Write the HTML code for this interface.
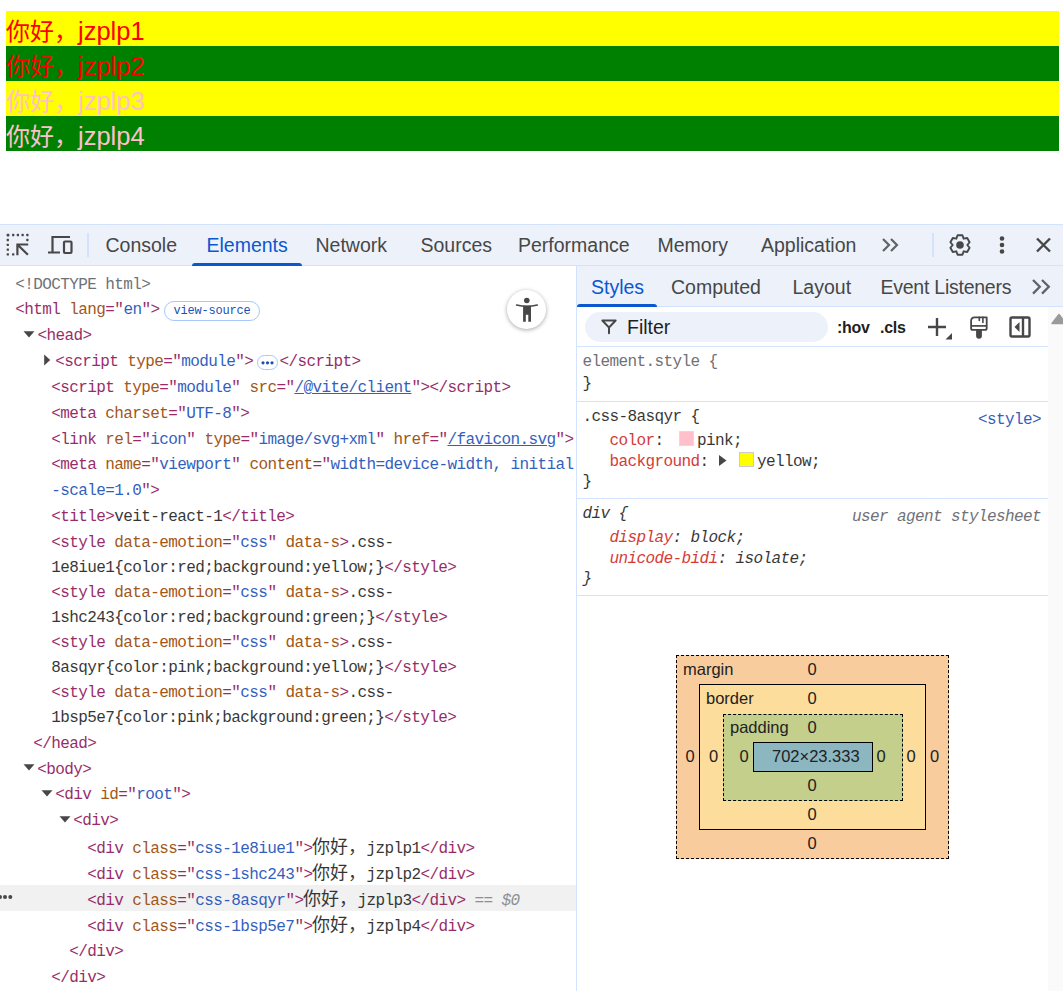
<!DOCTYPE html><html lang="zh-CN"><head><meta charset="utf-8"><style>
*{box-sizing:border-box}
html,body{margin:0;padding:0;width:1063px;height:991px;overflow:hidden;background:#fff}
body{position:relative;font-family:"Liberation Sans",sans-serif}
.a{position:absolute}
.bar{position:absolute;left:6px;width:1053px;height:35px}
.bt{position:absolute;left:6px;font:25.5px/35px "Liberation Sans",sans-serif;white-space:pre}
.cj{font-size:24px}
.tb{position:absolute;left:0;width:1063px;background:#edf2fa}
.tab{position:absolute;font:19.5px/24px "Liberation Sans",sans-serif;color:#474747;white-space:pre}
.m{position:absolute;font:16px/24px "Liberation Mono",monospace;letter-spacing:-0.6px;white-space:pre;color:#1f1f1f;opacity:.9}
.cz{font-family:"Liberation Serif",serif;font-size:18px;letter-spacing:0}
.line{position:absolute;background:#d3e3fd}
</style></head><body>
<div class="bar" style="top:11px;background:#ffff00"></div>
<div class="bt" style="top:13.5px;color:red"><span class="cj">你好，</span>jzplp1</div>
<div class="bar" style="top:46px;background:#008000"></div>
<div class="bt" style="top:48.5px;color:red"><span class="cj">你好，</span>jzplp2</div>
<div class="bar" style="top:81px;background:#ffff00"></div>
<div class="bt" style="top:83.5px;color:pink"><span class="cj">你好，</span>jzplp3</div>
<div class="bar" style="top:116px;background:#008000"></div>
<div class="bt" style="top:118.5px;color:pink"><span class="cj">你好，</span>jzplp4</div>
<div class="tb" style="top:224px;height:42px;border-top:1px solid #d3e3fd;border-bottom:1px solid #d3e3fd"></div>
<div class="tab" style="left:105.5px;top:233px;color:#474747">Console</div>
<div class="tab" style="left:206.5px;top:233px;color:#0b57d0">Elements</div>
<div class="tab" style="left:315.5px;top:233px;color:#474747">Network</div>
<div class="tab" style="left:420.5px;top:233px;color:#474747">Sources</div>
<div class="tab" style="left:518.0px;top:233px;color:#474747">Performance</div>
<div class="tab" style="left:657.5px;top:233px;color:#474747">Memory</div>
<div class="tab" style="left:761.0px;top:233px;color:#474747">Application</div>
<div class="a" style="left:192px;top:263px;width:110px;height:3px;background:#0b57d0;border-radius:3px 3px 0 0"></div>
<div class="line" style="left:87px;top:233px;width:2px;height:24px"></div>
<div class="line" style="left:932px;top:233px;width:1.6px;height:24px"></div>
<svg class="a" style="left:0;top:0" width="1063" height="991" viewBox="0 0 1063 991">
<g fill="none" stroke="#474747" stroke-width="2.2">
 <path d="M17.4 244.5 h10.8 M17.4 243.4 v11.9 M17.6 244.7 l10.3 10.1"/>
 <path d="M48 252.5 h12 M52.5 252.5 v-15.5 h17.5"/>
 <rect x="64" y="241.5" width="7.5" height="11.5" rx="1"/>
 <path d="M883 239 l6 6 l-6 6 M891 239 l6 6 l-6 6" stroke="#5f6368"/>
 <path d="M1037 238.5 l13 13 M1050 238.5 l-13 13" stroke-width="2.4"/>
</g>
<g fill="#474747"><rect x="6.65" y="233.85" width="2.7" height="2.7" rx="0.7"/><rect x="12.05" y="233.85" width="2.3" height="2.3" rx="0.6"/><rect x="16.75" y="233.85" width="2.3" height="2.3" rx="0.6"/><rect x="21.45" y="233.85" width="2.3" height="2.3" rx="0.6"/><rect x="26.25" y="233.85" width="2.3" height="2.3" rx="0.6"/><rect x="26.25" y="238.85" width="2.3" height="2.3" rx="0.6"/><rect x="6.65" y="238.85" width="2.3" height="2.3" rx="0.6"/><rect x="6.65" y="243.65" width="2.3" height="2.3" rx="0.6"/><rect x="6.65" y="248.45" width="2.3" height="2.3" rx="0.6"/><rect x="6.65" y="253.25" width="2.3" height="2.3" rx="0.6"/><rect x="12.05" y="253.25" width="2.3" height="2.3" rx="0.6"/>
 <circle cx="1002" cy="238.5" r="2.3"/><circle cx="1002" cy="245" r="2.3"/><circle cx="1002" cy="251.5" r="2.3"/>
</g>
</svg>
<svg class="a" style="left:0;top:0" width="1063" height="991"><polygon points="957.58,235.30 962.42,235.30 963.65,238.68 967.19,238.05 969.61,242.24 967.30,245.00 969.61,247.76 967.19,251.95 963.65,251.32 962.42,254.70 957.58,254.70 956.35,251.32 952.81,251.95 950.39,247.76 952.70,245.00 950.39,242.24 952.81,238.05 956.35,238.68" fill="none" stroke="#474747" stroke-width="1.9" stroke-linejoin="round"/><circle cx="960" cy="245" r="3.8" fill="#474747"/></svg>
<div class="line" style="left:576px;top:266px;width:1px;height:725px"></div>
<div class="a" style="left:0;top:885px;width:576px;height:26px;background:#f1f1f1"></div>
<div class="m" style="left:15.3px;top:273px"><span style="color:#5f6368">&lt;!DOCTYPE html&gt;</span></div>
<div class="m" style="left:15.3px;top:298px"><span style="color:#8e1458">&lt;</span><span style="color:#8e1458">html</span><span style="color:#8e1458"> </span><span style="color:#994500">lang</span><span style="color:#8e1458">=&quot;</span><span style="color:#1a4fb8">en</span><span style="color:#8e1458">&quot;&gt;</span></div>
<div class="a" style="left:164px;top:300.5px;width:96px;height:20px;border:1px solid #a8c7fa;border-radius:10px"></div>
<div class="a" style="left:173.5px;top:303px;font:12px/16px 'Liberation Mono',monospace;letter-spacing:-0.2px;color:#1a4fb8">view-source</div>
<svg class="a" style="left:23.4px;top:331px" width="12" height="7"><path d="M0.5 0.3 h11 l-5.5 6.3z" fill="#474747"/></svg>
<div class="m" style="left:37.5px;top:324px"><span style="color:#8e1458">&lt;head&gt;</span></div>
<svg class="a" style="left:44.199999999999996px;top:354px" width="7" height="12"><path d="M0.2 0.6 v11 l6 -5.5z" fill="#474747"/></svg>
<div class="m" style="left:55.3px;top:350px"><span style="color:#8e1458">&lt;script</span><span style="color:#994500"> type</span><span style="color:#8e1458">=&quot;</span><span style="color:#1a4fb8">module</span><span style="color:#8e1458">&quot;&gt;</span></div>
<div class="a" style="left:257px;top:355px;width:21px;height:14.5px;border:1px solid #a8c7fa;border-radius:7.5px"></div>
<svg class="a" style="left:257px;top:355px" width="21" height="15"><g fill="#1a4fb8"><circle cx="6" cy="7.8" r="1.6"/><circle cx="10.5" cy="7.8" r="1.6"/><circle cx="15" cy="7.8" r="1.6"/></g></svg>
<div class="m" style="left:279.5px;top:350px"><span style="color:#8e1458">&lt;/script&gt;</span></div>
<div class="m" style="left:51.3px;top:376px"><span style="color:#8e1458">&lt;script</span><span style="color:#994500"> type</span><span style="color:#8e1458">=&quot;</span><span style="color:#1a4fb8">module</span><span style="color:#8e1458">&quot;</span><span style="color:#994500"> src</span><span style="color:#8e1458">=&quot;</span><span style="color:#1a4fb8;text-decoration:underline">/@vite/client</span><span style="color:#8e1458">&quot;&gt;</span><span style="color:#8e1458">&lt;/script&gt;</span></div>
<div class="m" style="left:51.3px;top:402px"><span style="color:#8e1458">&lt;meta</span><span style="color:#994500"> charset</span><span style="color:#8e1458">=&quot;</span><span style="color:#1a4fb8">UTF-8</span><span style="color:#8e1458">&quot;&gt;</span></div>
<div class="m" style="left:51.3px;top:428px"><span style="color:#8e1458">&lt;link</span><span style="color:#994500"> rel</span><span style="color:#8e1458">=&quot;</span><span style="color:#1a4fb8">icon</span><span style="color:#8e1458">&quot;</span><span style="color:#994500"> type</span><span style="color:#8e1458">=&quot;</span><span style="color:#1a4fb8">image/svg+xml</span><span style="color:#8e1458">&quot;</span><span style="color:#994500"> href</span><span style="color:#8e1458">=&quot;</span><span style="color:#1a4fb8;text-decoration:underline">/favicon.svg</span><span style="color:#8e1458">&quot;&gt;</span></div>
<div class="m" style="left:51.3px;top:453px"><span style="color:#8e1458">&lt;meta</span><span style="color:#994500"> name</span><span style="color:#8e1458">=&quot;</span><span style="color:#1a4fb8">viewport</span><span style="color:#8e1458">&quot;</span><span style="color:#994500"> content</span><span style="color:#8e1458">=&quot;</span><span style="color:#1a4fb8">width=device-width, initial</span></div>
<div class="m" style="left:51.3px;top:478.5px"><span style="color:#1a4fb8">-scale=1.0</span><span style="color:#8e1458">&quot;&gt;</span></div>
<div class="m" style="left:51.3px;top:505px"><span style="color:#8e1458">&lt;title&gt;</span><span style="color:#1f1f1f">veit-react-1</span><span style="color:#8e1458">&lt;/title&gt;</span></div>
<div class="m" style="left:51.3px;top:531px"><span style="color:#8e1458">&lt;style</span><span style="color:#994500"> data-emotion</span><span style="color:#8e1458">=&quot;</span><span style="color:#1a4fb8">css</span><span style="color:#8e1458">&quot;</span><span style="color:#994500"> data-s</span><span style="color:#8e1458">&gt;</span><span style="color:#1f1f1f">.css-</span></div>
<div class="m" style="left:51.3px;top:555.5px"><span style="color:#1f1f1f">1e8iue1{color:red;background:yellow;}</span><span style="color:#8e1458">&lt;/style&gt;</span></div>
<div class="m" style="left:51.3px;top:581px"><span style="color:#8e1458">&lt;style</span><span style="color:#994500"> data-emotion</span><span style="color:#8e1458">=&quot;</span><span style="color:#1a4fb8">css</span><span style="color:#8e1458">&quot;</span><span style="color:#994500"> data-s</span><span style="color:#8e1458">&gt;</span><span style="color:#1f1f1f">.css-</span></div>
<div class="m" style="left:51.3px;top:605.5px"><span style="color:#1f1f1f">1shc243{color:red;background:green;}</span><span style="color:#8e1458">&lt;/style&gt;</span></div>
<div class="m" style="left:51.3px;top:631px"><span style="color:#8e1458">&lt;style</span><span style="color:#994500"> data-emotion</span><span style="color:#8e1458">=&quot;</span><span style="color:#1a4fb8">css</span><span style="color:#8e1458">&quot;</span><span style="color:#994500"> data-s</span><span style="color:#8e1458">&gt;</span><span style="color:#1f1f1f">.css-</span></div>
<div class="m" style="left:51.3px;top:655.5px"><span style="color:#1f1f1f">8asqyr{color:pink;background:yellow;}</span><span style="color:#8e1458">&lt;/style&gt;</span></div>
<div class="m" style="left:51.3px;top:681px"><span style="color:#8e1458">&lt;style</span><span style="color:#994500"> data-emotion</span><span style="color:#8e1458">=&quot;</span><span style="color:#1a4fb8">css</span><span style="color:#8e1458">&quot;</span><span style="color:#994500"> data-s</span><span style="color:#8e1458">&gt;</span><span style="color:#1f1f1f">.css-</span></div>
<div class="m" style="left:51.3px;top:705.5px"><span style="color:#1f1f1f">1bsp5e7{color:pink;background:green;}</span><span style="color:#8e1458">&lt;/style&gt;</span></div>
<div class="m" style="left:33.3px;top:732px"><span style="color:#8e1458">&lt;/head&gt;</span></div>
<svg class="a" style="left:23.4px;top:764px" width="12" height="7"><path d="M0.5 0.3 h11 l-5.5 6.3z" fill="#474747"/></svg>
<div class="m" style="left:37.3px;top:758px"><span style="color:#8e1458">&lt;body&gt;</span></div>
<svg class="a" style="left:41.4px;top:790px" width="12" height="7"><path d="M0.5 0.3 h11 l-5.5 6.3z" fill="#474747"/></svg>
<div class="m" style="left:55.3px;top:783px"><span style="color:#8e1458">&lt;div</span><span style="color:#994500"> id</span><span style="color:#8e1458">=&quot;</span><span style="color:#1a4fb8">root</span><span style="color:#8e1458">&quot;&gt;</span></div>
<svg class="a" style="left:59.4px;top:816px" width="12" height="7"><path d="M0.5 0.3 h11 l-5.5 6.3z" fill="#474747"/></svg>
<div class="m" style="left:73.3px;top:809px"><span style="color:#8e1458">&lt;div&gt;</span></div>
<div class="m" style="left:87.3px;top:835px"><span style="color:#8e1458">&lt;div</span><span style="color:#994500"> class</span><span style="color:#8e1458">=&quot;</span><span style="color:#1a4fb8">css-1e8iue1</span><span style="color:#8e1458">&quot;&gt;</span><span class="cz">你好，</span><span style="color:#1f1f1f">jzplp1</span><span style="color:#8e1458">&lt;/div&gt;</span></div>
<div class="m" style="left:87.3px;top:861px"><span style="color:#8e1458">&lt;div</span><span style="color:#994500"> class</span><span style="color:#8e1458">=&quot;</span><span style="color:#1a4fb8">css-1shc243</span><span style="color:#8e1458">&quot;&gt;</span><span class="cz">你好，</span><span style="color:#1f1f1f">jzplp2</span><span style="color:#8e1458">&lt;/div&gt;</span></div>
<div class="m" style="left:87.3px;top:887px"><span style="color:#8e1458">&lt;div</span><span style="color:#994500"> class</span><span style="color:#8e1458">=&quot;</span><span style="color:#1a4fb8">css-8asqyr</span><span style="color:#8e1458">&quot;&gt;</span><span class="cz">你好，</span><span style="color:#1f1f1f">jzplp3</span><span style="color:#8e1458">&lt;/div&gt;</span><span style="color:#80868b;font-style:italic"> == $0</span></div>
<div class="m" style="left:87.3px;top:913px"><span style="color:#8e1458">&lt;div</span><span style="color:#994500"> class</span><span style="color:#8e1458">=&quot;</span><span style="color:#1a4fb8">css-1bsp5e7</span><span style="color:#8e1458">&quot;&gt;</span><span class="cz">你好，</span><span style="color:#1f1f1f">jzplp4</span><span style="color:#8e1458">&lt;/div&gt;</span></div>
<div class="m" style="left:69.3px;top:940px"><span style="color:#8e1458">&lt;/div&gt;</span></div>
<div class="m" style="left:51.3px;top:966px"><span style="color:#8e1458">&lt;/div&gt;</span></div>
<svg class="a" style="left:0;top:893px" width="14" height="8"><circle cx="0" cy="4" r="2" fill="#474747"/><circle cx="5" cy="4" r="2" fill="#474747"/><circle cx="10.3" cy="4" r="2" fill="#474747"/></svg>
<div class="a" style="left:507px;top:289.5px;width:39.4px;height:39.4px;border-radius:50%;background:#fff;box-shadow:0 1px 4px rgba(0,0,0,0.35)"></div>
<svg class="a" style="left:502px;top:284px" width="50" height="50" viewBox="502 284 50 50">
<circle cx="526.8" cy="300.5" r="2.8" fill="#474747"/>
<path d="M516.6 305 Q527 307.5 537.3 305" stroke="#474747" stroke-width="1.6" fill="none" stroke-linecap="round"/>
<path d="M523.1 305.8 h7.9 v16 h-2.7 v-7 h-2.5 v7 h-2.7z" fill="#474747"/>
</svg>
<div class="tb" style="left:577px;width:486px;top:266px;height:41px;border-bottom:1px solid #d3e3fd"></div>
<div class="tab" style="left:591px;top:274.5px;color:#0b57d0">Styles</div>
<div class="tab" style="left:671px;top:274.5px;color:#474747">Computed</div>
<div class="tab" style="left:792.5px;top:274.5px;color:#474747">Layout</div>
<div class="tab" style="left:880.5px;top:274.5px;color:#474747;letter-spacing:-0.25px">Event Listeners</div>
<div class="a" style="left:577px;top:304px;width:80px;height:3px;background:#0b57d0;border-radius:3px 3px 0 0"></div>
<svg class="a" style="left:0;top:0" width="1063" height="991"><path d="M1033 280 l6.8 6.8 l-6.8 6.8 M1042 280 l6.8 6.8 l-6.8 6.8" stroke="#5f6368" stroke-width="2.3" fill="none"/></svg>
<div class="a" style="left:585px;top:312px;width:243px;height:30px;border-radius:15px;background:#edf2fa"></div>
<svg class="a" style="left:0;top:0" width="1063" height="991"><path d="M602.3 320.5 h13.4 l-6.7 7 z" fill="none" stroke="#474747" stroke-width="1.9" stroke-linejoin="round"/><path d="M609 327 v6.3" stroke="#474747" stroke-width="2" stroke-linecap="round"/></svg>
<div class="tab" style="left:627px;top:315px;color:#1f1f1f">Filter</div>
<div class="a" style="left:837px;top:316px;font:bold 16px/24px 'Liberation Sans';color:#1f1f1f;letter-spacing:-0.3px">:hov</div>
<div class="a" style="left:880px;top:316px;font:bold 16px/24px 'Liberation Sans';color:#1f1f1f;letter-spacing:-0.3px">.cls</div>
<svg class="a" style="left:0;top:0" width="1063" height="991">
<path d="M937 318 v18 M928 327 h18" stroke="#474747" stroke-width="2.4" fill="none"/>
<path d="M952 333 v6.5 h-6.5z" fill="#474747"/>
<path d="M986.7 317.4 V328.2 q0 1.7 -1.7 1.7 H972.8 q-1.7 0 -1.7 -1.7 V321 q0 -3.6 3.6 -3.6 Z" fill="none" stroke="#474747" stroke-width="1.8" stroke-linejoin="round"/>
<path d="M971.1 325.9 H986.7" stroke="#474747" stroke-width="1.7"/>
<path d="M979.3 317.4 V320.5 M982.9 317.4 V322.5" stroke="#474747" stroke-width="1.6" stroke-linecap="round"/>
<path d="M976.1 329.5 H981.9 V335.8 q0 2.9 -2.9 2.9 q-2.9 0 -2.9 -2.9 Z" fill="#474747"/>
<rect x="1010.5" y="317.5" width="19" height="19" rx="1.5" fill="none" stroke="#474747" stroke-width="2.4"/>
<path d="M1023 318 v18" stroke="#474747" stroke-width="2.4"/>
<path d="M1019.5 322 v10 l-5 -5z" fill="#474747"/>
</svg>
<div class="line" style="left:577px;top:345.5px;width:471px;height:1px"></div>
<div class="a" style="left:1048px;top:307px;width:15px;height:684px;background:#fafafa"></div>
<svg class="a" style="left:1048px;top:310px" width="15" height="16"><path d="M4 13.5 l7 -9 l7 9z" fill="#9a9a9a" stroke="#9a9a9a" stroke-width="1.5" stroke-linejoin="round"/></svg>
<div class="m" style="left:582.5px;top:350px"><span style="color:#5f6368">element.style {</span></div>
<div class="m" style="left:582.5px;top:372px"><span style="color:#1f1f1f">}</span></div>
<div class="line" style="left:577px;top:401px;width:471px;height:1px"></div>
<div class="m" style="left:582.5px;top:405px"><span style="color:#1f1f1f">.css-8asqyr {</span></div>
<div class="m" style="left:978px;top:407.5px"><span style="color:#1a4fb8">&lt;style&gt;</span></div>
<div class="m" style="left:609.5px;top:429px"><span style="color:#d0281e">color</span><span style="color:#1f1f1f">: </span></div>
<div class="a" style="left:679px;top:431px;width:15px;height:15px;background:pink;border:1px solid #ddd"></div>
<div class="m" style="left:697px;top:429px"><span style="color:#1f1f1f">pink;</span></div>
<div class="m" style="left:609.5px;top:450px"><span style="color:#d0281e">background</span><span style="color:#1f1f1f">: </span></div>
<svg class="a" style="left:718px;top:454px" width="10" height="13"><path d="M1 1 v11 l7.5 -5.5z" fill="#474747"/></svg>
<div class="a" style="left:739px;top:452px;width:15px;height:15px;background:yellow;border:1px solid #ccc"></div>
<div class="m" style="left:757px;top:450px"><span style="color:#1f1f1f">yellow;</span></div>
<div class="m" style="left:582.5px;top:470px"><span style="color:#1f1f1f">}</span></div>
<div class="line" style="left:577px;top:497.5px;width:471px;height:1px"></div>
<div class="m" style="left:582.5px;top:502px;font-style:italic"><span style="color:#1f1f1f">div {</span></div>
<div class="m" style="left:852px;top:504.5px;font-style:italic"><span style="color:#5f6368">user agent stylesheet</span></div>
<div class="m" style="left:609.5px;top:526px;font-style:italic"><span style="color:#d0281e">display</span><span style="color:#1f1f1f">: block;</span></div>
<div class="m" style="left:609.5px;top:547px;font-style:italic"><span style="color:#d0281e">unicode-bidi</span><span style="color:#1f1f1f">: isolate;</span></div>
<div class="m" style="left:582.5px;top:567px;font-style:italic"><span style="color:#1f1f1f">}</span></div>
<div class="line" style="left:577px;top:594.5px;width:471px;height:1px"></div>
<div class="a" style="left:676px;top:655px;width:272.5px;height:203.5px;background:#f9cc9d;border:1px dashed #000"></div>
<div class="a" style="left:699px;top:684px;width:226.5px;height:145.5px;background:#fddd9b;border:1px solid #000"></div>
<div class="a" style="left:723px;top:713.5px;width:180px;height:87.0px;background:#c3cf8a;border:1px dashed #000"></div>
<div class="a" style="left:753px;top:741.8px;width:120px;height:30.200000000000045px;background:#8cb6c0;border:1px solid #000"></div>
<div class="a" style="left:683px;top:657.3px;font:16.5px/24px 'Liberation Sans';color:#222">margin</div>
<div class="a" style="left:772px;top:657.3px;width:80px;text-align:center;font:16.5px/24px 'Liberation Sans';color:#222">0</div>
<div class="a" style="left:706px;top:686.3px;font:16.5px/24px 'Liberation Sans';color:#222">border</div>
<div class="a" style="left:772px;top:686.3px;width:80px;text-align:center;font:16.5px/24px 'Liberation Sans';color:#222">0</div>
<div class="a" style="left:730px;top:715.3px;font:16.5px/24px 'Liberation Sans';color:#222">padding</div>
<div class="a" style="left:772px;top:715.3px;width:80px;text-align:center;font:16.5px/24px 'Liberation Sans';color:#222">0</div>
<div class="a" style="left:772px;top:744.3px;width:80px;text-align:center;font:16.5px/24px 'Liberation Sans';color:#222">702×23.333</div>
<div class="a" style="left:650px;top:744.3px;width:80px;text-align:center;font:16.5px/24px 'Liberation Sans';color:#222">0</div>
<div class="a" style="left:673.5px;top:744.3px;width:80px;text-align:center;font:16.5px/24px 'Liberation Sans';color:#222">0</div>
<div class="a" style="left:704px;top:744.3px;width:80px;text-align:center;font:16.5px/24px 'Liberation Sans';color:#222">0</div>
<div class="a" style="left:841px;top:744.3px;width:80px;text-align:center;font:16.5px/24px 'Liberation Sans';color:#222">0</div>
<div class="a" style="left:871px;top:744.3px;width:80px;text-align:center;font:16.5px/24px 'Liberation Sans';color:#222">0</div>
<div class="a" style="left:894.5px;top:744.3px;width:80px;text-align:center;font:16.5px/24px 'Liberation Sans';color:#222">0</div>
<div class="a" style="left:772px;top:773.3px;width:80px;text-align:center;font:16.5px/24px 'Liberation Sans';color:#222">0</div>
<div class="a" style="left:772px;top:802.3px;width:80px;text-align:center;font:16.5px/24px 'Liberation Sans';color:#222">0</div>
<div class="a" style="left:772px;top:831.3px;width:80px;text-align:center;font:16.5px/24px 'Liberation Sans';color:#222">0</div>
</body></html>
